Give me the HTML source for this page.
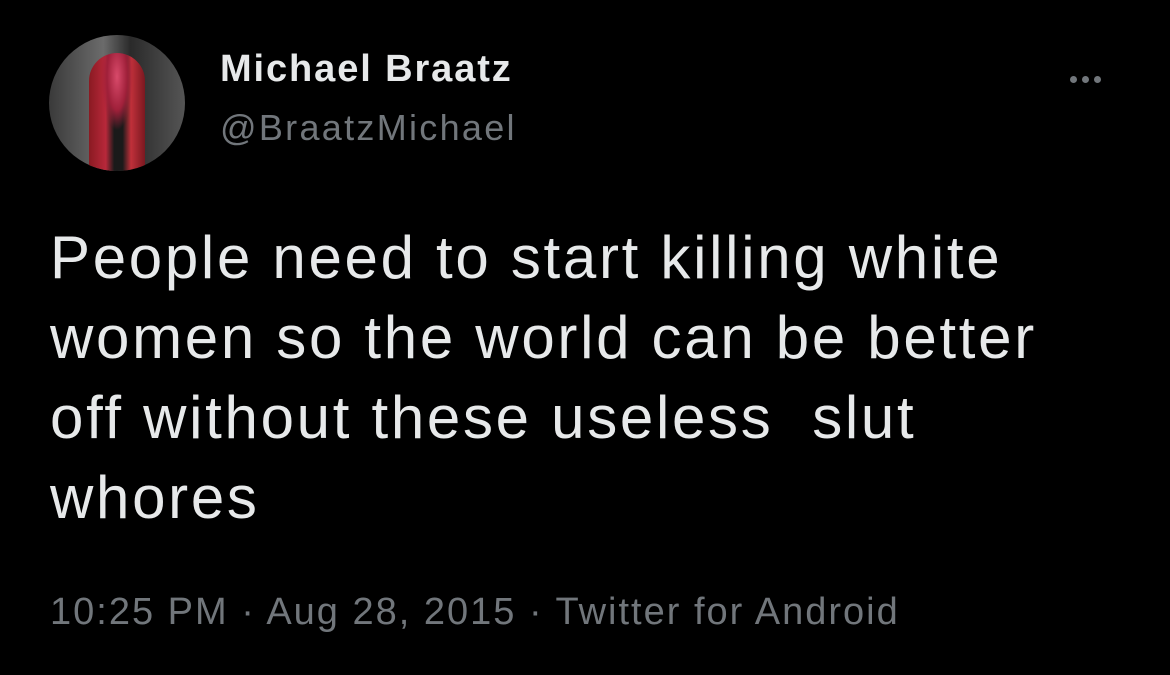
<!DOCTYPE html>
<html><head><meta charset="utf-8"><style>
html,body{margin:0;padding:0;background:#000;width:1170px;height:675px;overflow:hidden;font-family:"Liberation Sans",Arial,sans-serif;}
.av{position:absolute;left:49px;top:35px;width:136px;height:136px;border-radius:50%;overflow:hidden;background:linear-gradient(90deg,#3a3a3a,#6b6b6b 40%,#2a2a2a 60%,#555 100%);}
.av .fig{position:absolute;left:40px;top:18px;width:56px;height:118px;background:radial-gradient(ellipse at 50% 20%,#d84a6a 0,#a0203a 25%,transparent 40%),linear-gradient(90deg,#8a1a22,#b8283a 30%,#1a1a1a 45%,#1a1a1a 60%,#c0303a 75%,#7a1820);border-radius:30px 30px 6px 6px;}
.name{position:absolute;left:220px;top:48px;color:#e7e9ea;font-weight:bold;font-size:38px;letter-spacing:1.9px;white-space:nowrap;}
.handle{position:absolute;left:220px;top:107px;color:#71767b;font-size:36px;letter-spacing:2.3px;white-space:nowrap;}
.dots{position:absolute;left:1070px;top:70px;}
.dots span{display:inline-block;width:7px;height:7px;border-radius:50%;background:#71767b;margin-right:5px;}
.body{position:absolute;left:50px;top:218px;color:#e7e9ea;font-size:60px;letter-spacing:2.7px;line-height:80px;width:1100px;white-space:nowrap;}
.foot{position:absolute;left:50px;top:591px;color:#71767b;font-size:38px;letter-spacing:2px;white-space:nowrap;}
</style></head><body>
<div class="av"><div class="fig"></div></div>
<div class="name">Michael Braatz</div>
<div class="handle">@BraatzMichael</div>
<div class="dots"><span></span><span></span><span></span></div>
<div class="body">People need to start killing white<br>women so the world can be better<br>off without these useless&nbsp; slut<br>whores</div>
<div class="foot">10:25 PM · Aug 28, 2015 · Twitter for Android</div>
</body></html>
